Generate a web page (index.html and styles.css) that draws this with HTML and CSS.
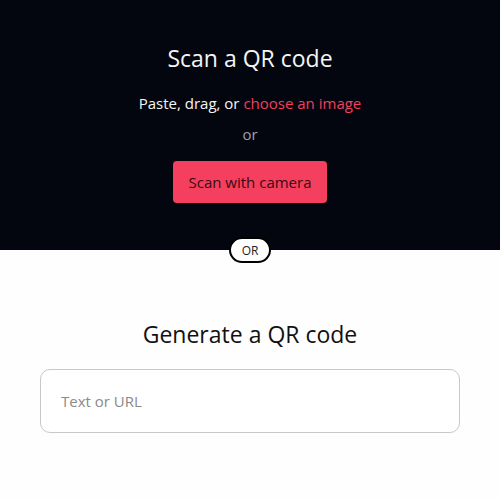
FILE: index.html
```html
<!DOCTYPE html>
<html lang="en">
<head>
<meta charset="utf-8">
<title>QR</title>
<link rel="stylesheet" href="styles.css">
</head>
<body>
<section class="scan">
  <h1 class="title">Scan a QR code</h1>
  <p class="hint">Paste, drag, or <a class="pick" href="#">choose an image</a></p>
  <p class="or-text">or</p>
  <button class="cam">Scan with camera</button>
  <span class="divider">OR</span>
</section>
<section class="gen">
  <h2 class="title dark">Generate a QR code</h2>
  <input class="field" type="text" placeholder="Text or URL">
</section>
</body>
</html>
```
FILE: styles.css
```css
html, body { margin: 0; padding: 0; }
body {
  font-family: "Open Sans", "Noto Sans", sans-serif;
  background: #fefefe;
}
.scan {
  position: relative;
  background: #03060f;
  height: 250px;
  display: flex;
  flex-direction: column;
  align-items: center;
  box-sizing: border-box;
  padding-top: 40px;
}
.title {
  margin: 0;
  font-size: 23px;
  font-weight: 400;
  color: #f5f5f5;
  line-height: 36px;
}
.title.dark { color: #111; }
.hint {
  margin: 15px 0 0;
  font-size: 15px;
  line-height: 24px;
  color: #f5f5f5;
}
.pick { color: #f43f5e; text-decoration: none; }
.or-text {
  margin: 7px 0 0;
  font-size: 15px;
  line-height: 24px;
  color: #a0a0a8;
}
.cam {
  margin-top: 15px;
  width: 154px;
  height: 42px;
  border: none;
  border-radius: 4px;
  background: #f43f5e;
  color: #3a0a14;
  font-family: inherit;
  font-size: 15px;
}
.divider {
  position: absolute;
  left: 229px;
  top: 237px;
  width: 42px;
  height: 26px;
  box-sizing: border-box;
  border: 2px solid #000;
  border-radius: 13px;
  background: #fff;
  color: #222;
  font-size: 12px;
  display: flex;
  align-items: center;
  justify-content: center;
}
.gen {
  display: flex;
  flex-direction: column;
  align-items: center;
  padding-top: 66px;
}
.field {
  margin-top: 17px;
  width: 420px;
  height: 64px;
  box-sizing: border-box;
  border: 1px solid #c8c8c8;
  border-radius: 10px;
  padding: 0 20px;
  font-family: inherit;
  font-size: 15px;
  background: #fff;
}
.field::placeholder { color: #8a8a8a; }
```
